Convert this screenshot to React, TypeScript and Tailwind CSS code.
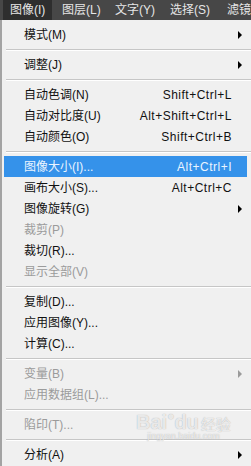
type Item =
  | { kind: "sep" }
  | {
      kind: "item";
      label: string;
      shortcut?: string;
      sub?: boolean;
      disabled?: boolean;
      active?: boolean;
    };

const items: Item[] = [
  { kind: "item", label: "模式(M)", sub: true },
  { kind: "sep" },
  { kind: "item", label: "调整(J)", sub: true },
  { kind: "sep" },
  { kind: "item", label: "自动色调(N)", shortcut: "Shift+Ctrl+L" },
  { kind: "item", label: "自动对比度(U)", shortcut: "Alt+Shift+Ctrl+L" },
  { kind: "item", label: "自动颜色(O)", shortcut: "Shift+Ctrl+B" },
  { kind: "sep" },
  { kind: "item", label: "图像大小(I)...", shortcut: "Alt+Ctrl+I", active: true },
  { kind: "item", label: "画布大小(S)...", shortcut: "Alt+Ctrl+C" },
  { kind: "item", label: "图像旋转(G)", sub: true },
  { kind: "item", label: "裁剪(P)", disabled: true },
  { kind: "item", label: "裁切(R)..." },
  { kind: "item", label: "显示全部(V)", disabled: true },
  { kind: "sep" },
  { kind: "item", label: "复制(D)..." },
  { kind: "item", label: "应用图像(Y)..." },
  { kind: "item", label: "计算(C)..." },
  { kind: "sep" },
  { kind: "item", label: "变量(B)", sub: true, disabled: true },
  { kind: "item", label: "应用数据组(L)...", disabled: true },
  { kind: "sep" },
  { kind: "item", label: "陷印(T)...", disabled: true },
  { kind: "sep" },
  { kind: "item", label: "分析(A)", sub: true },
];

const font = "font-['Liberation_Sans','Noto_Sans_CJK_SC',sans-serif]";

function MenuBar() {
  return (
    <div className="flex h-[20px] items-center bg-[#474747] text-[12px] text-[#e6e6e6]">
      <div className="ml-[3px] flex h-[20px] w-[50px] items-center bg-[#2e2e2e] pl-[7px]">
        图像(I)
      </div>
      <div className="ml-[3px] w-[54px] pl-[7px]">图层(L)</div>
      <div className="w-[56px] pl-[7px]">文字(Y)</div>
      <div className="w-[58px] pl-[7px]">选择(S)</div>
      <div className="pl-[7px] whitespace-nowrap">滤镜</div>
    </div>
  );
}

function Row({ item }: { item: Extract<Item, { kind: "item" }> }) {
  const color = item.active
    ? "text-[#eaf4ff]"
    : item.disabled
      ? "text-[#9b9b9b]"
      : "text-[#111]";
  return (
    <div
      className={`ml-[2px] flex h-[21px] w-[243px] items-center ${color} ${
        item.active ? "bg-[#3592ea]" : ""
      }`}
    >
      <span className="flex-1 pl-[20px] whitespace-nowrap">{item.label}</span>
      {item.shortcut && (
        <span className="whitespace-nowrap tracking-[0.5px]">
          {item.shortcut}
        </span>
      )}
      <span className="flex w-[15px] items-center pl-[6px]">
        {item.sub && (
          <span
            className={`h-0 w-0 border-y-[4px] border-l-[4px] border-y-transparent ${
              item.disabled ? "border-l-[#9b9b9b]" : "border-l-black"
            }`}
          />
        )}
      </span>
    </div>
  );
}

export default function App() {
  return (
    <div
      className={`relative h-[466px] w-[251px] overflow-hidden bg-[#f0f0f0] ${font}`}
    >
      <MenuBar />
      <div className="h-[446px] border-l-[2px] border-[#a3a3a3] pt-[4px] text-[12px]">
        {items.map((it, i) =>
          it.kind === "sep" ? (
            <div key={i} className="flex h-[9px] items-center pl-[4px]">
              <div className="h-[2px] flex-1 border-t border-b border-t-[#c6c6c6] border-b-white" />
            </div>
          ) : (
            <Row key={i} item={it} />
          ),
        )}
      </div>

      {/* baidu watermark */}
      <div className="pointer-events-none absolute left-[136px] top-[410px] flex flex-col items-center text-white/75 [text-shadow:0_0_1px_#a0a0a0]">
        <div className="flex items-end leading-none">
          <span className="text-[20px] font-bold">Bai</span>
          <span className="mb-[10px] text-[12px]">●</span>
          <span className="text-[20px] font-bold">du</span>
          <span className="ml-[2px] text-[15px]">经验</span>
        </div>
        <span className="text-[9px] leading-none">jingyan.baidu.com</span>
      </div>
    </div>
  );
}
